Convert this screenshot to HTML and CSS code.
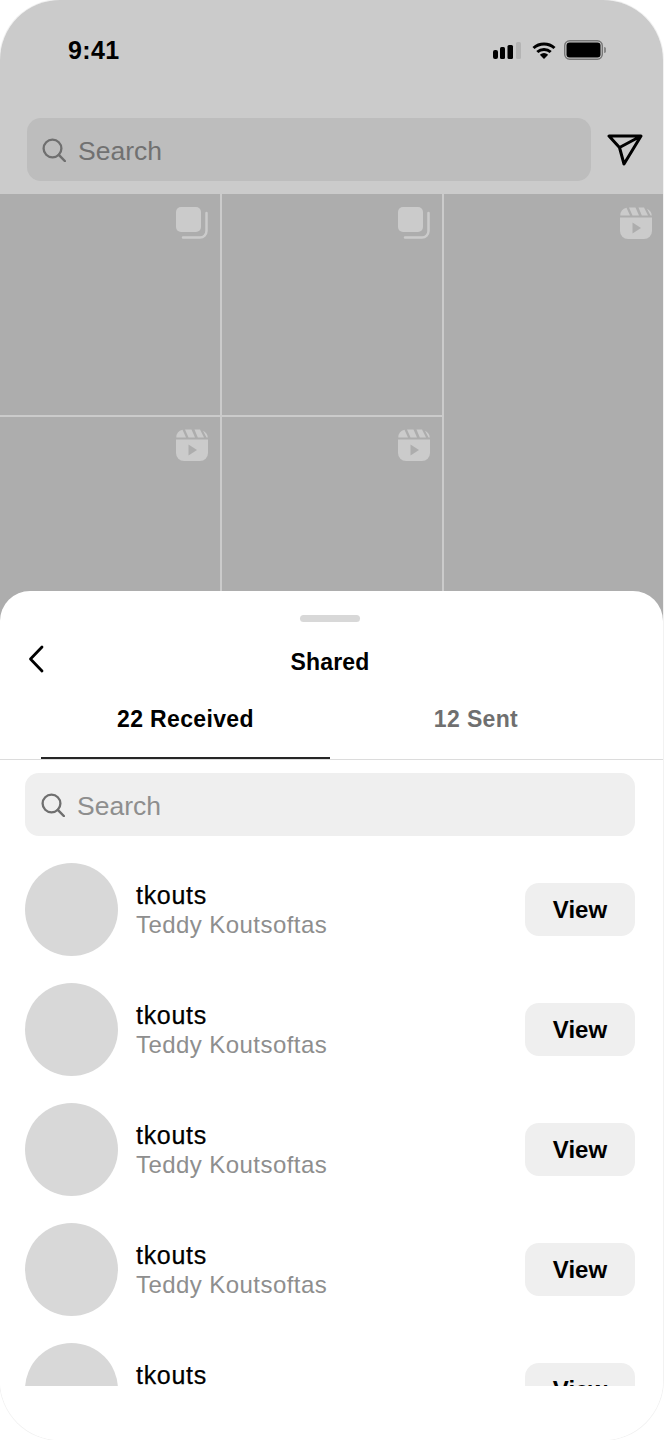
FILE: index.html
```html
<!DOCTYPE html>
<html>
<head>
	<meta charset="utf-8">
	<title>Shared</title>
	<link rel="stylesheet" href="styles.css">
</head>
<body>
	<svg class="defs" width="0" height="0">
		<symbol id="lens" viewBox="0 0 24 24">
			<circle cx="10.500" cy="10.500" r="8.900" fill="none" stroke="currentColor" stroke-width="2.300"/>
			<path d="M16.800 16.800L22.800 23" fill="none" stroke="currentColor" stroke-width="2.500" stroke-linecap="round"/>
		</symbol>
		<symbol id="stack" viewBox="0 0 32 32">
			<rect x="0" y="0" width="25" height="25" rx="5" fill="currentColor"/>
			<path d="M30.500 6v18a6.500 6.500 0 0 1-6.500 6.500H7" fill="none" stroke="currentColor" stroke-width="2.500" stroke-linecap="round"/>
		</symbol>
		<symbol id="reel" viewBox="0 0 32 32">
			<path d="M0 10.500h32V24a8 8 0 0 1-8 8H8a8 8 0 0 1-8-8z" fill="currentColor"/>
			<path d="M0.300 8.500A8 8 0 0 1 6.500 0.800L10 8.500zM9 0.500h6.500L19 8.500H12.500zM18.500 0.500H24L28 8.500H21.800zM27 1.800A8 8 0 0 1 31.800 8.500H30.500z" fill="currentColor"/>
			<path d="M12.500 15.500L21 21l-8.500 5.500z" fill="#adadad"/>
		</symbol>
	</svg>

	<div class="phone">
		<div class="dimmed">
			<div class="status">
				<span class="time">9:41</span>
				<div class="status-icons">
					<svg width="28" height="17" viewBox="0 0 28 17">
						<rect x="0" y="8" width="5" height="9" rx="2" fill="#000"/>
						<rect x="7" y="5" width="5" height="12" rx="1.500" fill="#000"/>
						<rect x="14.500" y="3" width="5.500" height="14" rx="1.500" fill="#000"/>
						<rect x="23" y="0" width="5" height="17" rx="1.500" fill="#b4b4b4"/>
					</svg>
					<svg class="wifi" width="24" height="17" viewBox="0 0 24 17">
						<path d="M1.500 6a15.500 15.500 0 0 1 21 0M5.300 10a10 10 0 0 1 13.400 0" fill="none" stroke="#000" stroke-width="3"/>
						<path d="M7.800 12.800a6.500 6.500 0 0 1 8.400 0L12 17z" fill="#000"/>
					</svg>
					<svg width="42" height="20" viewBox="0 0 42 20">
						<rect x="0.700" y="0.700" width="37.600" height="18.600" rx="5" fill="none" stroke="#777" stroke-width="1.400"/>
						<rect x="2.500" y="2.500" width="34" height="15" rx="3" fill="#000"/>
						<path d="M40 7a2.500 3 0 0 1 0 6z" fill="#888"/>
					</svg>
				</div>
			</div>
			<div class="topbar">
				<div class="search search-dark">
					<svg class="lens"><use href="#lens"/></svg>
					<span>Search</span>
				</div>
				<svg class="send" width="36" height="32" viewBox="0 0 36 32">
					<path d="M2 2h32L17 30 12.500 13.500zM12.500 13.500L34 2" fill="none" stroke="#000" stroke-width="3" stroke-linejoin="round"/>
				</svg>
			</div>
			<div class="grid">
				<div class="tile"><svg class="tile-icon"><use href="#stack"/></svg></div>
				<div class="tile"><svg class="tile-icon"><use href="#stack"/></svg></div>
				<div class="tile tile-tall"><svg class="tile-icon"><use href="#reel"/></svg></div>
				<div class="tile tile-low"><svg class="tile-icon"><use href="#reel"/></svg></div>
				<div class="tile tile-low"><svg class="tile-icon"><use href="#reel"/></svg></div>
			</div>
		</div>

		<div class="sheet">
			<div class="handle"></div>
			<div class="sheet-head">
				<svg class="back" width="16" height="28" viewBox="0 0 16 28">
					<path d="M14 2L2.500 14 14 26" fill="none" stroke="#000" stroke-width="2.800" stroke-linecap="round" stroke-linejoin="round"/>
				</svg>
				<span class="title">Shared</span>
			</div>
			<div class="tabs">
				<div class="tab tab-on">22 Received</div>
				<div class="tab">12 Sent</div>
			</div>
			<div class="sheet-search">
				<div class="search search-light">
					<svg class="lens"><use href="#lens"/></svg>
					<span>Search</span>
				</div>
			</div>
			<div class="list">
				<div class="row">
					<div class="avatar"></div>
					<div class="names"><div class="handle-name">tkouts</div><div class="full-name">Teddy Koutsoftas</div></div>
					<div class="view">View</div>
				</div>
				<div class="row">
					<div class="avatar"></div>
					<div class="names"><div class="handle-name">tkouts</div><div class="full-name">Teddy Koutsoftas</div></div>
					<div class="view">View</div>
				</div>
				<div class="row">
					<div class="avatar"></div>
					<div class="names"><div class="handle-name">tkouts</div><div class="full-name">Teddy Koutsoftas</div></div>
					<div class="view">View</div>
				</div>
				<div class="row">
					<div class="avatar"></div>
					<div class="names"><div class="handle-name">tkouts</div><div class="full-name">Teddy Koutsoftas</div></div>
					<div class="view">View</div>
				</div>
				<div class="row">
					<div class="avatar"></div>
					<div class="names"><div class="handle-name">tkouts</div><div class="full-name">Teddy Koutsoftas</div></div>
					<div class="view">View</div>
				</div>
			</div>
		</div>
	</div>
</body>
</html>
```

FILE: styles.css
```css
html, body {margin:0;padding:0;background:#fff;}
body {font-family:"Liberation Sans",Arial,sans-serif;color:#000;}
.defs {position:absolute;}

.phone {position:relative;width:663px;height:1440px;border-radius:60px;overflow:hidden;background:#fff;box-shadow:0 0 0 1px #f2f2f2;}
.dimmed {height:640px;background:#cbcbcb;overflow:hidden;}

.status {height:100px;padding:0 0 0 68px;display:flex;align-items:center;justify-content:space-between;box-sizing:border-box;}
.time {font-size:25px;font-weight:bold;letter-spacing:.4px;}
.status-icons {display:flex;align-items:center;gap:8px;padding-right:57px;}
.wifi {margin-left:3px;}

.topbar {display:flex;align-items:center;margin-top:18px;padding-left:27px;}
.search {display:flex;align-items:center;height:63px;border-radius:14px;font-size:26.5px;box-sizing:border-box;padding-left:15px;}
.search span {margin-top:4px;}
.search-dark {width:564px;background:#bdbdbd;color:#717171;}
.search-light {background:#efefef;color:#8e8e8e;padding-left:16px;}
.lens {width:24px;height:24px;margin-right:12px;color:#6f6f6f;flex:none;}
.send {margin-left:16px;}

.grid {display:grid;grid-template-columns:220px 220px 1fr;grid-auto-rows:221px;gap:2px;margin-top:13px;}
.tile {background:#adadad;color:#cbcbcb;display:flex;justify-content:flex-end;padding:13px 12px 0 0;box-sizing:border-box;}
.tile-tall {grid-row:span 2;padding-right:11px;}
.tile-low {padding-top:12px;}
.tile-icon {width:32px;height:32px;}

.sheet {position:absolute;left:0;right:0;top:591px;bottom:0;background:#fff;border-radius:30px 30px 0 0;}
.handle {width:60px;height:7px;border-radius:4px;background:#d8d8d8;margin:24px 0 0 300px;}
.sheet-head {height:46px;margin-top:17px;display:flex;align-items:center;justify-content:center;position:relative;padding-right:3px;}
.back {position:absolute;left:28px;top:6px;}
.title {font-size:23px;font-weight:bold;letter-spacing:.2px;}
.tabs {display:grid;grid-template-columns:289px 292px;height:75px;padding:0 41px;border-bottom:1px solid #dcdcdc;box-sizing:border-box;}
.tab {font-size:23px;font-weight:bold;color:#6f6f6f;letter-spacing:.35px;text-align:center;padding-top:21px;box-sizing:border-box;height:74px;}
.tab-on {color:#000;border-bottom:2px solid #262626;}
.sheet-search {padding:13px 28px 0 25px;}
.list {height:550px;overflow:hidden;padding:0 28px 0 25px;}
.row {display:flex;align-items:center;height:93px;margin-top:27px;}
.avatar {width:93px;height:93px;border-radius:50%;background:#d8d8d8;flex:none;}
.names {flex:1;padding-left:18px;}
.handle-name {font-size:25px;line-height:30px;letter-spacing:.7px;-webkit-text-stroke:.25px #000;}
.full-name {font-size:24px;line-height:30px;letter-spacing:.44px;color:#8e8e8e;}
.view {width:110px;height:53px;border-radius:14px;background:#efefef;display:flex;align-items:center;justify-content:center;font-size:24px;font-weight:bold;}
```
